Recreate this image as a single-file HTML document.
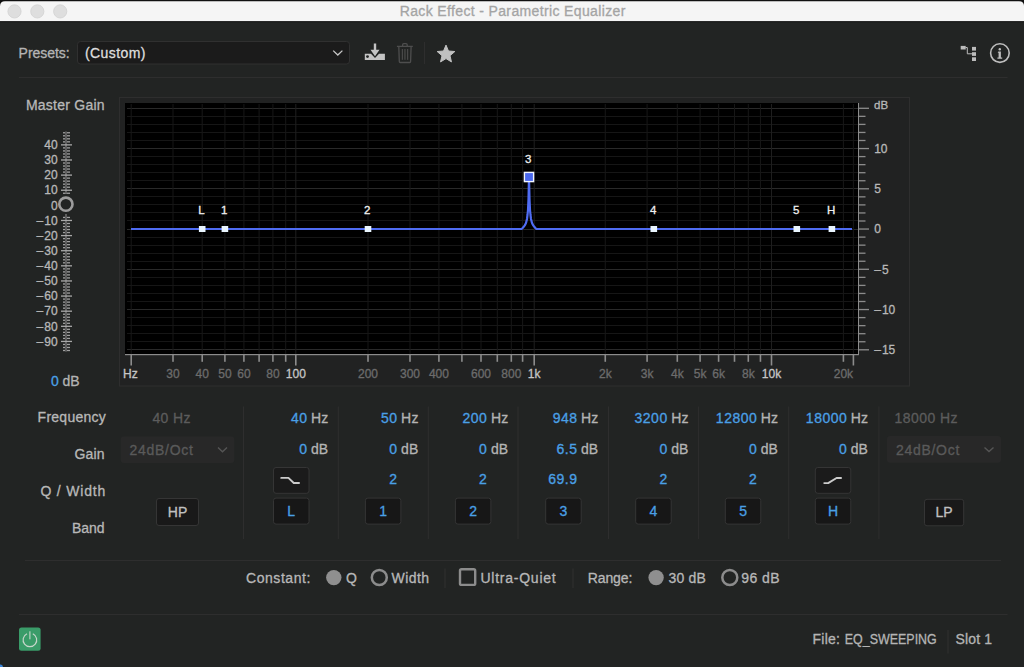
<!DOCTYPE html>
<html><head><meta charset="utf-8"><title>Rack Effect - Parametric Equalizer</title>
<style>html,body{margin:0;padding:0;background:#222423;overflow:hidden;width:1024px;height:667px}svg text{font-family:"Liberation Sans",sans-serif}</style></head>
<body><svg width="1024" height="667" viewBox="0 0 1024 667" style="display:block;font-family:'Liberation Sans',sans-serif" font-family="Liberation Sans, sans-serif"><rect x="0" y="0" width="1024" height="667" fill="#222423"/>
<rect x="0" y="0" width="1024" height="22" fill="#111"/>
<path d="M0,6 Q0,1.3 5,1.3 L1019,1.3 Q1024,1.3 1024,6 L1024,21.3 L0,21.3 Z" fill="#f5f5f5"/>
<rect x="0" y="21.3" width="1024" height="1" fill="#1a1a1a"/>
<circle cx="14.5" cy="11.4" r="6.6" fill="#dedede" stroke="#d2d2d2" stroke-width="0.8"/>
<circle cx="37.3" cy="11.4" r="6.6" fill="#dedede" stroke="#d2d2d2" stroke-width="0.8"/>
<circle cx="60.2" cy="11.4" r="6.6" fill="#dedede" stroke="#d2d2d2" stroke-width="0.8"/>
<text x="512.7" y="16.1" font-size="14" fill="#a4a4a4" stroke="#a4a4a4" stroke-width="0.3" text-anchor="middle" font-weight="normal" letter-spacing="0.36" >Rack Effect - Parametric Equalizer</text>
<text x="18.6" y="58.4" font-size="14" fill="#b4b4b4" stroke="#b4b4b4" stroke-width="0.3" text-anchor="start" font-weight="normal" letter-spacing="-0.05" >Presets:</text>
<rect x="77.5" y="41.5" width="272" height="22.5" rx="3" fill="#1b1b1b" stroke="#303030"/>
<text x="85" y="58.4" font-size="14" fill="#dedede" stroke="#dedede" stroke-width="0.3" text-anchor="start" font-weight="normal" letter-spacing="0.4" >(Custom)</text>
<polyline points="333.2,50.6 337.8,55 342.4,50.6" fill="none" stroke="#c8c8c8" stroke-width="1.3"/>
<path d="M373.8,43.6 h2.4 v6.2 h3.3 l-4.5,6.4 l-4.5,-6.4 h3.3 z" fill="#c4c4c4"/>
<path d="M364.8,53.8 h6.2 l4,4.3 l4,-4.3 h5.9 v6.3 h-20.1 z" fill="#c4c4c4"/>
<circle cx="367.5" cy="56.6" r="1.4" fill="#222423"/>
<g fill="none" stroke="#4e4e4e" stroke-width="1.3"><path d="M396.9,46.4 h15.9"/><path d="M402.6,46.2 v-1.3 q0,-1.2 1.2,-1.2 h2.2 q1.2,0 1.2,1.2 v1.3"/><path d="M398.8,46.6 l0.5,15 q0,0.9 0.9,0.9 h9.5 q0.9,0 0.9,-0.9 l0.5,-15"/></g>
<g fill="#4e4e4e"><rect x="401.8" y="49" width="1.1" height="10.8"/><rect x="404.4" y="49" width="1.1" height="10.8"/><rect x="407.1" y="49" width="1.1" height="10.8"/></g>
<rect x="424" y="42" width="1" height="22" fill="#2e2e2e"/>
<polygon points="446.00,45.10 448.47,51.00 454.84,51.53 449.99,55.70 451.47,61.92 446.00,58.60 440.53,61.92 442.01,55.70 437.16,51.53 443.53,51.00" fill="#c0c0c0" stroke="#c0c0c0" stroke-width="1" stroke-linejoin="round"/>
<g fill="#bcbcbc"><rect x="960.7" y="45.9" width="5" height="3.6"/><rect x="972" y="46.9" width="4" height="3.7"/><rect x="972" y="52.2" width="4" height="3.7"/><rect x="972" y="57.3" width="4" height="3.7"/></g>
<path d="M965.5,47.5 h1.8 v6.3 h4.9" fill="none" stroke="#bcbcbc" stroke-width="1"/>
<circle cx="999.9" cy="53.1" r="9.3" fill="none" stroke="#bdbdbd" stroke-width="1.6"/>
<circle cx="999.8" cy="49.2" r="1.2" fill="#bdbdbd"/>
<path d="M998.3,51.4 h2.6 v6 h1.3 v1.3 h-4.8 v-1.3 h1.2 v-4.7 h-0.9 z" fill="#bdbdbd"/>
<rect x="19" y="77" width="988.5" height="1" fill="#2e2e2e"/>
<rect x="119.5" y="97.5" width="790" height="288.5" fill="#212222" stroke="#2e2e2e"/>
<rect x="125" y="103" width="733.5" height="251.5" fill="#000"/>
<rect x="127" y="349" width="731" height="1" fill="#2a2a2a"/>
<rect x="127" y="341" width="731" height="1" fill="#161616"/>
<rect x="127" y="333" width="731" height="1" fill="#161616"/>
<rect x="127" y="325" width="731" height="1" fill="#161616"/>
<rect x="127" y="317" width="731" height="1" fill="#161616"/>
<rect x="127" y="309" width="731" height="1" fill="#2a2a2a"/>
<rect x="127" y="301" width="731" height="1" fill="#161616"/>
<rect x="127" y="293" width="731" height="1" fill="#161616"/>
<rect x="127" y="285" width="731" height="1" fill="#161616"/>
<rect x="127" y="277" width="731" height="1" fill="#161616"/>
<rect x="127" y="269" width="731" height="1" fill="#2a2a2a"/>
<rect x="127" y="261" width="731" height="1" fill="#161616"/>
<rect x="127" y="253" width="731" height="1" fill="#161616"/>
<rect x="127" y="245" width="731" height="1" fill="#161616"/>
<rect x="127" y="237" width="731" height="1" fill="#161616"/>
<rect x="127" y="229" width="731" height="1" fill="#2a2a2a"/>
<rect x="127" y="220" width="731" height="1" fill="#161616"/>
<rect x="127" y="212" width="731" height="1" fill="#161616"/>
<rect x="127" y="204" width="731" height="1" fill="#161616"/>
<rect x="127" y="196" width="731" height="1" fill="#161616"/>
<rect x="127" y="188" width="731" height="1" fill="#2a2a2a"/>
<rect x="127" y="180" width="731" height="1" fill="#161616"/>
<rect x="127" y="172" width="731" height="1" fill="#161616"/>
<rect x="127" y="164" width="731" height="1" fill="#161616"/>
<rect x="127" y="156" width="731" height="1" fill="#161616"/>
<rect x="127" y="148" width="731" height="1" fill="#2a2a2a"/>
<rect x="127" y="140" width="731" height="1" fill="#161616"/>
<rect x="127" y="132" width="731" height="1" fill="#161616"/>
<rect x="127" y="124" width="731" height="1" fill="#161616"/>
<rect x="127" y="116" width="731" height="1" fill="#161616"/>
<rect x="127" y="108" width="731" height="1" fill="#2a2a2a"/>
<rect x="130.70" y="104" width="1" height="250" fill="#171717"/>
<rect x="172.50" y="104" width="1" height="250" fill="#171717"/>
<rect x="201.70" y="104" width="1" height="250" fill="#171717"/>
<rect x="224.40" y="104" width="1" height="250" fill="#171717"/>
<rect x="243.40" y="104" width="1" height="250" fill="#171717"/>
<rect x="258.60" y="104" width="1" height="250" fill="#171717"/>
<rect x="272.40" y="104" width="1" height="250" fill="#171717"/>
<rect x="285.20" y="104" width="1" height="250" fill="#171717"/>
<rect x="295.30" y="104" width="1" height="250" fill="#1e1e1e"/>
<rect x="367.50" y="104" width="1" height="250" fill="#171717"/>
<rect x="409.50" y="104" width="1" height="250" fill="#171717"/>
<rect x="438.40" y="104" width="1" height="250" fill="#171717"/>
<rect x="461.40" y="104" width="1" height="250" fill="#171717"/>
<rect x="480.50" y="104" width="1" height="250" fill="#171717"/>
<rect x="496.80" y="104" width="1" height="250" fill="#171717"/>
<rect x="510.80" y="104" width="1" height="250" fill="#171717"/>
<rect x="522.10" y="104" width="1" height="250" fill="#171717"/>
<rect x="533.70" y="104" width="1" height="250" fill="#1e1e1e"/>
<rect x="604.76" y="104" width="1" height="250" fill="#171717"/>
<rect x="646.59" y="104" width="1" height="250" fill="#171717"/>
<rect x="676.80" y="104" width="1" height="250" fill="#171717"/>
<rect x="699.60" y="104" width="1" height="250" fill="#171717"/>
<rect x="718.10" y="104" width="1" height="250" fill="#171717"/>
<rect x="734.01" y="104" width="1" height="250" fill="#171717"/>
<rect x="747.79" y="104" width="1" height="250" fill="#171717"/>
<rect x="759.94" y="104" width="1" height="250" fill="#171717"/>
<rect x="771.00" y="104" width="1" height="250" fill="#1e1e1e"/>
<rect x="842.90" y="104" width="1" height="250" fill="#171717"/>
<rect x="852.90" y="104" width="1" height="250" fill="#171717"/>
<rect x="125" y="354" width="734" height="1.2" fill="#8c8c8c"/>
<rect x="858" y="103" width="1" height="252" fill="#8c8c8c"/>
<rect x="130.40" y="355" width="1.6" height="10.5" fill="#8c8c8c"/>
<rect x="172.20" y="355" width="1.6" height="6.8" fill="#8c8c8c"/>
<rect x="201.40" y="355" width="1.6" height="6.8" fill="#8c8c8c"/>
<rect x="224.10" y="355" width="1.6" height="6.8" fill="#8c8c8c"/>
<rect x="243.10" y="355" width="1.6" height="6.8" fill="#8c8c8c"/>
<rect x="258.30" y="355" width="1.6" height="6.8" fill="#8c8c8c"/>
<rect x="272.10" y="355" width="1.6" height="6.8" fill="#8c8c8c"/>
<rect x="284.90" y="355" width="1.6" height="6.8" fill="#8c8c8c"/>
<rect x="295.00" y="355" width="1.6" height="10.5" fill="#8c8c8c"/>
<rect x="367.20" y="355" width="1.6" height="6.8" fill="#8c8c8c"/>
<rect x="409.20" y="355" width="1.6" height="6.8" fill="#8c8c8c"/>
<rect x="438.10" y="355" width="1.6" height="6.8" fill="#8c8c8c"/>
<rect x="461.10" y="355" width="1.6" height="6.8" fill="#8c8c8c"/>
<rect x="480.20" y="355" width="1.6" height="6.8" fill="#8c8c8c"/>
<rect x="496.50" y="355" width="1.6" height="6.8" fill="#8c8c8c"/>
<rect x="510.50" y="355" width="1.6" height="6.8" fill="#8c8c8c"/>
<rect x="521.80" y="355" width="1.6" height="6.8" fill="#8c8c8c"/>
<rect x="533.40" y="355" width="1.6" height="10.5" fill="#8c8c8c"/>
<rect x="604.46" y="355" width="1.6" height="6.8" fill="#8c8c8c"/>
<rect x="646.29" y="355" width="1.6" height="6.8" fill="#8c8c8c"/>
<rect x="676.50" y="355" width="1.6" height="6.8" fill="#8c8c8c"/>
<rect x="699.30" y="355" width="1.6" height="6.8" fill="#8c8c8c"/>
<rect x="717.80" y="355" width="1.6" height="6.8" fill="#8c8c8c"/>
<rect x="733.71" y="355" width="1.6" height="6.8" fill="#8c8c8c"/>
<rect x="747.49" y="355" width="1.6" height="6.8" fill="#8c8c8c"/>
<rect x="759.64" y="355" width="1.6" height="6.8" fill="#8c8c8c"/>
<rect x="770.70" y="355" width="1.6" height="10.5" fill="#8c8c8c"/>
<rect x="842.60" y="355" width="1.6" height="6.8" fill="#8c8c8c"/>
<rect x="852.60" y="355" width="1.6" height="10.5" fill="#8c8c8c"/>
<text x="130.4" y="378" font-size="12" fill="#c6c6c6" stroke="#c6c6c6" stroke-width="0.3" text-anchor="middle" font-weight="normal" >Hz</text>
<text x="173" y="378" font-size="12" fill="#6c6c6c" stroke="#6c6c6c" stroke-width="0.3" text-anchor="middle" font-weight="normal" >30</text>
<text x="202.2" y="378" font-size="12" fill="#6c6c6c" stroke="#6c6c6c" stroke-width="0.3" text-anchor="middle" font-weight="normal" >40</text>
<text x="224.9" y="378" font-size="12" fill="#6c6c6c" stroke="#6c6c6c" stroke-width="0.3" text-anchor="middle" font-weight="normal" >50</text>
<text x="243.9" y="378" font-size="12" fill="#6c6c6c" stroke="#6c6c6c" stroke-width="0.3" text-anchor="middle" font-weight="normal" >60</text>
<text x="272.9" y="378" font-size="12" fill="#6c6c6c" stroke="#6c6c6c" stroke-width="0.3" text-anchor="middle" font-weight="normal" >80</text>
<text x="295.8" y="378" font-size="12" fill="#c6c6c6" stroke="#c6c6c6" stroke-width="0.3" text-anchor="middle" font-weight="normal" >100</text>
<text x="368" y="378" font-size="12" fill="#6c6c6c" stroke="#6c6c6c" stroke-width="0.3" text-anchor="middle" font-weight="normal" >200</text>
<text x="410" y="378" font-size="12" fill="#6c6c6c" stroke="#6c6c6c" stroke-width="0.3" text-anchor="middle" font-weight="normal" >300</text>
<text x="438.9" y="378" font-size="12" fill="#6c6c6c" stroke="#6c6c6c" stroke-width="0.3" text-anchor="middle" font-weight="normal" >400</text>
<text x="481" y="378" font-size="12" fill="#6c6c6c" stroke="#6c6c6c" stroke-width="0.3" text-anchor="middle" font-weight="normal" >600</text>
<text x="511.3" y="378" font-size="12" fill="#6c6c6c" stroke="#6c6c6c" stroke-width="0.3" text-anchor="middle" font-weight="normal" >800</text>
<text x="534.2" y="378" font-size="12" fill="#c6c6c6" stroke="#c6c6c6" stroke-width="0.3" text-anchor="middle" font-weight="normal" >1k</text>
<text x="605.3" y="378" font-size="12" fill="#6c6c6c" stroke="#6c6c6c" stroke-width="0.3" text-anchor="middle" font-weight="normal" >2k</text>
<text x="647.1" y="378" font-size="12" fill="#6c6c6c" stroke="#6c6c6c" stroke-width="0.3" text-anchor="middle" font-weight="normal" >3k</text>
<text x="677.3" y="378" font-size="12" fill="#6c6c6c" stroke="#6c6c6c" stroke-width="0.3" text-anchor="middle" font-weight="normal" >4k</text>
<text x="700.1" y="378" font-size="12" fill="#6c6c6c" stroke="#6c6c6c" stroke-width="0.3" text-anchor="middle" font-weight="normal" >5k</text>
<text x="718.6" y="378" font-size="12" fill="#6c6c6c" stroke="#6c6c6c" stroke-width="0.3" text-anchor="middle" font-weight="normal" >6k</text>
<text x="748.3" y="378" font-size="12" fill="#6c6c6c" stroke="#6c6c6c" stroke-width="0.3" text-anchor="middle" font-weight="normal" >8k</text>
<text x="771.5" y="378" font-size="12" fill="#c6c6c6" stroke="#c6c6c6" stroke-width="0.3" text-anchor="middle" font-weight="normal" >10k</text>
<text x="843.4" y="378" font-size="12" fill="#6c6c6c" stroke="#6c6c6c" stroke-width="0.3" text-anchor="middle" font-weight="normal" >20k</text>
<rect x="858" y="349.15" width="11" height="1.3" fill="#8c8c8c"/>
<rect x="858" y="341.1" width="7.5" height="1.3" fill="#8c8c8c"/>
<rect x="858" y="333.04999999999995" width="7.5" height="1.3" fill="#8c8c8c"/>
<rect x="858" y="325.0" width="7.5" height="1.3" fill="#8c8c8c"/>
<rect x="858" y="316.95" width="7.5" height="1.3" fill="#8c8c8c"/>
<rect x="858" y="308.9" width="11" height="1.3" fill="#8c8c8c"/>
<rect x="858" y="300.84999999999997" width="7.5" height="1.3" fill="#8c8c8c"/>
<rect x="858" y="292.79999999999995" width="7.5" height="1.3" fill="#8c8c8c"/>
<rect x="858" y="284.75" width="7.5" height="1.3" fill="#8c8c8c"/>
<rect x="858" y="276.7" width="7.5" height="1.3" fill="#8c8c8c"/>
<rect x="858" y="268.65" width="11" height="1.3" fill="#8c8c8c"/>
<rect x="858" y="260.59999999999997" width="7.5" height="1.3" fill="#8c8c8c"/>
<rect x="858" y="252.55" width="7.5" height="1.3" fill="#8c8c8c"/>
<rect x="858" y="244.5" width="7.5" height="1.3" fill="#8c8c8c"/>
<rect x="858" y="236.45000000000002" width="7.5" height="1.3" fill="#8c8c8c"/>
<rect x="858" y="228.4" width="11" height="1.3" fill="#8c8c8c"/>
<rect x="858" y="220.35" width="7.5" height="1.3" fill="#8c8c8c"/>
<rect x="858" y="212.3" width="7.5" height="1.3" fill="#8c8c8c"/>
<rect x="858" y="204.25" width="7.5" height="1.3" fill="#8c8c8c"/>
<rect x="858" y="196.20000000000002" width="7.5" height="1.3" fill="#8c8c8c"/>
<rect x="858" y="188.15" width="11" height="1.3" fill="#8c8c8c"/>
<rect x="858" y="180.1" width="7.5" height="1.3" fill="#8c8c8c"/>
<rect x="858" y="172.04999999999998" width="7.5" height="1.3" fill="#8c8c8c"/>
<rect x="858" y="164.0" width="7.5" height="1.3" fill="#8c8c8c"/>
<rect x="858" y="155.95000000000002" width="7.5" height="1.3" fill="#8c8c8c"/>
<rect x="858" y="147.9" width="11" height="1.3" fill="#8c8c8c"/>
<rect x="858" y="139.85" width="7.5" height="1.3" fill="#8c8c8c"/>
<rect x="858" y="131.79999999999998" width="7.5" height="1.3" fill="#8c8c8c"/>
<rect x="858" y="123.75" width="7.5" height="1.3" fill="#8c8c8c"/>
<rect x="858" y="115.69999999999999" width="7.5" height="1.3" fill="#8c8c8c"/>
<rect x="858" y="107.64999999999999" width="11" height="1.3" fill="#8c8c8c"/>
<text x="874" y="108.8" font-size="11.5" fill="#b8b8b8" stroke="#b8b8b8" stroke-width="0.3" text-anchor="start" font-weight="normal" >dB</text>
<text x="874.2" y="152.8" font-size="12" fill="#b8b8b8" stroke="#b8b8b8" stroke-width="0.3" text-anchor="start" font-weight="normal" >10</text>
<text x="874.2" y="193.05" font-size="12" fill="#b8b8b8" stroke="#b8b8b8" stroke-width="0.3" text-anchor="start" font-weight="normal" >5</text>
<text x="874.2" y="233.3" font-size="12" fill="#b8b8b8" stroke="#b8b8b8" stroke-width="0.3" text-anchor="start" font-weight="normal" >0</text>
<text x="874.2" y="273.55" font-size="12" fill="#b8b8b8" stroke="#b8b8b8" stroke-width="0.3" text-anchor="start" font-weight="normal" >–<tspan dx="1">5</tspan></text>
<text x="874.2" y="313.8" font-size="12" fill="#b8b8b8" stroke="#b8b8b8" stroke-width="0.3" text-anchor="start" font-weight="normal" >–<tspan dx="1">10</tspan></text>
<text x="874.2" y="354.05" font-size="12" fill="#b8b8b8" stroke="#b8b8b8" stroke-width="0.3" text-anchor="start" font-weight="normal" >–<tspan dx="1">15</tspan></text>
<polyline points="131.000,229.00 520.000,229.00 519.000,229.00 519.125,229.00 519.250,229.00 519.375,229.00 519.500,229.00 519.625,229.00 519.750,229.00 519.875,229.00 520.000,229.00 520.125,229.00 520.250,229.00 520.375,229.00 520.500,229.00 520.625,229.00 520.750,229.00 520.875,229.00 521.000,229.00 521.125,229.00 521.250,229.00 521.375,229.00 521.500,229.00 521.625,228.90 521.750,228.80 521.875,228.70 522.000,228.60 522.125,228.47 522.250,228.35 522.375,228.22 522.500,228.10 522.625,227.97 522.750,227.85 522.875,227.72 523.000,227.60 523.125,227.45 523.250,227.30 523.375,227.15 523.500,227.00 523.625,226.85 523.750,226.70 523.875,226.55 524.000,226.40 524.125,226.22 524.250,226.05 524.375,225.88 524.500,225.70 524.625,225.53 524.750,225.35 524.875,225.18 525.000,225.00 525.125,224.75 525.250,224.50 525.375,224.25 525.500,224.00 525.625,223.75 525.750,223.50 525.875,223.25 526.000,223.00 526.125,222.50 526.250,222.00 526.375,221.50 526.500,221.00 526.625,220.50 526.750,220.00 526.875,219.50 527.000,219.00 527.125,218.00 527.250,217.00 527.375,216.00 527.500,215.00 527.625,213.75 527.750,212.50 527.875,211.25 528.000,210.00 528.125,207.25 528.250,204.50 528.375,201.75 528.500,199.00 528.625,193.50 528.750,188.00 528.875,182.50 529.000,177.00 529.125,182.50 529.250,188.00 529.375,193.50 529.500,199.00 529.625,201.75 529.750,204.50 529.875,207.25 530.000,210.00 530.125,211.25 530.250,212.50 530.375,213.75 530.500,215.00 530.625,216.00 530.750,217.00 530.875,218.00 531.000,219.00 531.125,219.50 531.250,220.00 531.375,220.50 531.500,221.00 531.625,221.50 531.750,222.00 531.875,222.50 532.000,223.00 532.125,223.25 532.250,223.50 532.375,223.75 532.500,224.00 532.625,224.25 532.750,224.50 532.875,224.75 533.000,225.00 533.125,225.18 533.250,225.35 533.375,225.53 533.500,225.70 533.625,225.88 533.750,226.05 533.875,226.22 534.000,226.40 534.125,226.55 534.250,226.70 534.375,226.85 534.500,227.00 534.625,227.15 534.750,227.30 534.875,227.45 535.000,227.60 535.125,227.72 535.250,227.85 535.375,227.97 535.500,228.10 535.625,228.22 535.750,228.35 535.875,228.47 536.000,228.60 536.125,228.70 536.250,228.80 536.375,228.90 536.500,229.00 536.625,229.00 536.750,229.00 536.875,229.00 537.000,229.00 537.125,229.00 537.250,229.00 537.375,229.00 537.500,229.00 537.625,229.00 537.750,229.00 537.875,229.00 538.000,229.00 538.125,229.00 538.250,229.00 538.375,229.00 538.500,229.00 538.625,229.00 538.750,229.00 538.875,229.00 539.000,229.00 538.000,229.00 852.000,229.00" fill="none" stroke="#4f6cf2" stroke-width="2.2" stroke-linejoin="round"/>
<rect x="198.9" y="226" width="6.6" height="6" fill="#eaf6ff"/>
<text x="201.5" y="214.1" font-size="11.5" fill="#f0f0f0" stroke="#f0f0f0" stroke-width="0.3" text-anchor="middle" font-weight="normal" >L</text>
<rect x="221.6" y="226" width="6.6" height="6" fill="#eaf6ff"/>
<text x="224.2" y="214.1" font-size="11.5" fill="#f0f0f0" stroke="#f0f0f0" stroke-width="0.3" text-anchor="middle" font-weight="normal" >1</text>
<rect x="364.7" y="226" width="6.6" height="6" fill="#eaf6ff"/>
<text x="367.3" y="214.1" font-size="11.5" fill="#f0f0f0" stroke="#f0f0f0" stroke-width="0.3" text-anchor="middle" font-weight="normal" >2</text>
<rect x="650.5" y="226" width="6.6" height="6" fill="#eaf6ff"/>
<text x="653.1" y="214.1" font-size="11.5" fill="#f0f0f0" stroke="#f0f0f0" stroke-width="0.3" text-anchor="middle" font-weight="normal" >4</text>
<rect x="793.5" y="226" width="6.6" height="6" fill="#eaf6ff"/>
<text x="796.1" y="214.1" font-size="11.5" fill="#f0f0f0" stroke="#f0f0f0" stroke-width="0.3" text-anchor="middle" font-weight="normal" >5</text>
<rect x="828.6" y="226" width="6.6" height="6" fill="#eaf6ff"/>
<text x="831.2" y="214.1" font-size="11.5" fill="#f0f0f0" stroke="#f0f0f0" stroke-width="0.3" text-anchor="middle" font-weight="normal" >H</text>
<rect x="524.4" y="172.4" width="9.2" height="9.2" fill="#4a68ee" stroke="#f0f4ff" stroke-width="1.4"/>
<text x="528.2" y="162.6" font-size="11.5" fill="#f0f0f0" stroke="#f0f0f0" stroke-width="0.3" text-anchor="middle" font-weight="normal" >3</text>
<text x="25.9" y="110" font-size="14" fill="#b8b8b8" stroke="#b8b8b8" stroke-width="0.3" text-anchor="start" font-weight="normal" letter-spacing="0.25" >Master Gain</text>
<rect x="63" y="132.12" width="7" height="1.3" fill="#a0a0a0"/>
<rect x="63" y="135.15" width="7" height="1.3" fill="#a0a0a0"/>
<rect x="63" y="138.17" width="7" height="1.3" fill="#a0a0a0"/>
<rect x="63" y="141.20" width="7" height="1.3" fill="#a0a0a0"/>
<rect x="63" y="147.24" width="7" height="1.3" fill="#a0a0a0"/>
<rect x="63" y="150.27" width="7" height="1.3" fill="#a0a0a0"/>
<rect x="63" y="153.29" width="7" height="1.3" fill="#a0a0a0"/>
<rect x="63" y="156.32" width="7" height="1.3" fill="#a0a0a0"/>
<rect x="63" y="162.36" width="7" height="1.3" fill="#a0a0a0"/>
<rect x="63" y="165.39" width="7" height="1.3" fill="#a0a0a0"/>
<rect x="63" y="168.41" width="7" height="1.3" fill="#a0a0a0"/>
<rect x="63" y="171.44" width="7" height="1.3" fill="#a0a0a0"/>
<rect x="63" y="177.48" width="7" height="1.3" fill="#a0a0a0"/>
<rect x="63" y="180.51" width="7" height="1.3" fill="#a0a0a0"/>
<rect x="63" y="183.53" width="7" height="1.3" fill="#a0a0a0"/>
<rect x="63" y="186.56" width="7" height="1.3" fill="#a0a0a0"/>
<rect x="63" y="192.60" width="7" height="1.3" fill="#a0a0a0"/>
<rect x="63" y="216.80" width="7" height="1.3" fill="#a0a0a0"/>
<rect x="63" y="222.84" width="7" height="1.3" fill="#a0a0a0"/>
<rect x="63" y="225.87" width="7" height="1.3" fill="#a0a0a0"/>
<rect x="63" y="228.89" width="7" height="1.3" fill="#a0a0a0"/>
<rect x="63" y="231.92" width="7" height="1.3" fill="#a0a0a0"/>
<rect x="63" y="237.96" width="7" height="1.3" fill="#a0a0a0"/>
<rect x="63" y="240.99" width="7" height="1.3" fill="#a0a0a0"/>
<rect x="63" y="244.01" width="7" height="1.3" fill="#a0a0a0"/>
<rect x="63" y="247.04" width="7" height="1.3" fill="#a0a0a0"/>
<rect x="63" y="253.08" width="7" height="1.3" fill="#a0a0a0"/>
<rect x="63" y="256.11" width="7" height="1.3" fill="#a0a0a0"/>
<rect x="63" y="259.13" width="7" height="1.3" fill="#a0a0a0"/>
<rect x="63" y="262.16" width="7" height="1.3" fill="#a0a0a0"/>
<rect x="63" y="268.20" width="7" height="1.3" fill="#a0a0a0"/>
<rect x="63" y="271.23" width="7" height="1.3" fill="#a0a0a0"/>
<rect x="63" y="274.25" width="7" height="1.3" fill="#a0a0a0"/>
<rect x="63" y="277.28" width="7" height="1.3" fill="#a0a0a0"/>
<rect x="63" y="283.32" width="7" height="1.3" fill="#a0a0a0"/>
<rect x="63" y="286.35" width="7" height="1.3" fill="#a0a0a0"/>
<rect x="63" y="289.37" width="7" height="1.3" fill="#a0a0a0"/>
<rect x="63" y="292.40" width="7" height="1.3" fill="#a0a0a0"/>
<rect x="63" y="298.44" width="7" height="1.3" fill="#a0a0a0"/>
<rect x="63" y="301.47" width="7" height="1.3" fill="#a0a0a0"/>
<rect x="63" y="304.49" width="7" height="1.3" fill="#a0a0a0"/>
<rect x="63" y="307.52" width="7" height="1.3" fill="#a0a0a0"/>
<rect x="63" y="313.56" width="7" height="1.3" fill="#a0a0a0"/>
<rect x="63" y="316.59" width="7" height="1.3" fill="#a0a0a0"/>
<rect x="63" y="319.61" width="7" height="1.3" fill="#a0a0a0"/>
<rect x="63" y="322.64" width="7" height="1.3" fill="#a0a0a0"/>
<rect x="63" y="328.68" width="7" height="1.3" fill="#a0a0a0"/>
<rect x="63" y="331.71" width="7" height="1.3" fill="#a0a0a0"/>
<rect x="63" y="334.73" width="7" height="1.3" fill="#a0a0a0"/>
<rect x="63" y="337.76" width="7" height="1.3" fill="#a0a0a0"/>
<rect x="63" y="343.80" width="7" height="1.3" fill="#a0a0a0"/>
<rect x="63" y="346.83" width="7" height="1.3" fill="#a0a0a0"/>
<rect x="63" y="349.85" width="7" height="1.3" fill="#a0a0a0"/>
<rect x="65" y="131.5" width="2" height="62" fill="#5e5e5e"/>
<rect x="65" y="214" width="2" height="137.5" fill="#5e5e5e"/>
<rect x="61" y="144.22" width="11" height="1.3" fill="#a8a8a8"/>
<rect x="61" y="159.34" width="11" height="1.3" fill="#a8a8a8"/>
<rect x="61" y="174.46" width="11" height="1.3" fill="#a8a8a8"/>
<rect x="61" y="189.58" width="11" height="1.3" fill="#a8a8a8"/>
<rect x="61" y="219.82" width="11" height="1.3" fill="#a8a8a8"/>
<rect x="61" y="234.94" width="11" height="1.3" fill="#a8a8a8"/>
<rect x="61" y="250.06" width="11" height="1.3" fill="#a8a8a8"/>
<rect x="61" y="265.18" width="11" height="1.3" fill="#a8a8a8"/>
<rect x="61" y="280.30" width="11" height="1.3" fill="#a8a8a8"/>
<rect x="61" y="295.42" width="11" height="1.3" fill="#a8a8a8"/>
<rect x="61" y="310.54" width="11" height="1.3" fill="#a8a8a8"/>
<rect x="61" y="325.66" width="11" height="1.3" fill="#a8a8a8"/>
<rect x="61" y="340.78" width="11" height="1.3" fill="#a8a8a8"/>
<text x="57.6" y="149.12" font-size="12" fill="#b8b8b8" stroke="#b8b8b8" stroke-width="0.3" text-anchor="end" font-weight="normal" >40</text>
<text x="57.6" y="164.24" font-size="12" fill="#b8b8b8" stroke="#b8b8b8" stroke-width="0.3" text-anchor="end" font-weight="normal" >30</text>
<text x="57.6" y="179.36" font-size="12" fill="#b8b8b8" stroke="#b8b8b8" stroke-width="0.3" text-anchor="end" font-weight="normal" >20</text>
<text x="57.6" y="194.48" font-size="12" fill="#b8b8b8" stroke="#b8b8b8" stroke-width="0.3" text-anchor="end" font-weight="normal" >10</text>
<text x="57.6" y="209.6" font-size="12" fill="#b8b8b8" stroke="#b8b8b8" stroke-width="0.3" text-anchor="end" font-weight="normal" >0</text>
<text x="57.6" y="224.72" font-size="12" fill="#b8b8b8" stroke="#b8b8b8" stroke-width="0.3" text-anchor="end" font-weight="normal" >–<tspan dx="1">10</tspan></text>
<text x="57.6" y="239.84" font-size="12" fill="#b8b8b8" stroke="#b8b8b8" stroke-width="0.3" text-anchor="end" font-weight="normal" >–<tspan dx="1">20</tspan></text>
<text x="57.6" y="254.96" font-size="12" fill="#b8b8b8" stroke="#b8b8b8" stroke-width="0.3" text-anchor="end" font-weight="normal" >–<tspan dx="1">30</tspan></text>
<text x="57.6" y="270.08" font-size="12" fill="#b8b8b8" stroke="#b8b8b8" stroke-width="0.3" text-anchor="end" font-weight="normal" >–<tspan dx="1">40</tspan></text>
<text x="57.6" y="285.2" font-size="12" fill="#b8b8b8" stroke="#b8b8b8" stroke-width="0.3" text-anchor="end" font-weight="normal" >–<tspan dx="1">50</tspan></text>
<text x="57.6" y="300.32" font-size="12" fill="#b8b8b8" stroke="#b8b8b8" stroke-width="0.3" text-anchor="end" font-weight="normal" >–<tspan dx="1">60</tspan></text>
<text x="57.6" y="315.44" font-size="12" fill="#b8b8b8" stroke="#b8b8b8" stroke-width="0.3" text-anchor="end" font-weight="normal" >–<tspan dx="1">70</tspan></text>
<text x="57.6" y="330.56" font-size="12" fill="#b8b8b8" stroke="#b8b8b8" stroke-width="0.3" text-anchor="end" font-weight="normal" >–<tspan dx="1">80</tspan></text>
<text x="57.6" y="345.68" font-size="12" fill="#b8b8b8" stroke="#b8b8b8" stroke-width="0.3" text-anchor="end" font-weight="normal" >–<tspan dx="1">90</tspan></text>
<circle cx="65.9" cy="204.2" r="6.6" fill="#222423" stroke="#9c9c9c" stroke-width="2.6"/>
<text x="51" y="385.6" font-size="14" fill="#4aa0e6" stroke="#4aa0e6" stroke-width="0.3" text-anchor="start" font-weight="normal" >0</text>
<text x="62.5" y="385.6" font-size="14" fill="#b4b4b4" stroke="#b4b4b4" stroke-width="0.3" text-anchor="start" font-weight="normal" >dB</text>
<text x="106" y="422.3" font-size="14" fill="#b8b8b8" stroke="#b8b8b8" stroke-width="0.3" text-anchor="end" font-weight="normal" letter-spacing="0.25" >Frequency</text>
<text x="104.8" y="458.7" font-size="14" fill="#b8b8b8" stroke="#b8b8b8" stroke-width="0.3" text-anchor="end" font-weight="normal" letter-spacing="0.2" >Gain</text>
<text x="106" y="496" font-size="14" fill="#b8b8b8" stroke="#b8b8b8" stroke-width="0.3" text-anchor="end" font-weight="normal" letter-spacing="0.8" >Q / Width</text>
<text x="104.6" y="532.7" font-size="14" fill="#b8b8b8" stroke="#b8b8b8" stroke-width="0.3" text-anchor="end" font-weight="normal" >Band</text>
<rect x="243.0" y="406.5" width="1" height="132.5" fill="#2e2e2e"/>
<rect x="337.8" y="406.5" width="1" height="132.5" fill="#2e2e2e"/>
<rect x="427.8" y="406.5" width="1" height="132.5" fill="#2e2e2e"/>
<rect x="517.5" y="406.5" width="1" height="132.5" fill="#2e2e2e"/>
<rect x="608.0" y="406.5" width="1" height="132.5" fill="#2e2e2e"/>
<rect x="697.9" y="406.5" width="1" height="132.5" fill="#2e2e2e"/>
<rect x="788.2" y="406.5" width="1" height="132.5" fill="#2e2e2e"/>
<rect x="878.4" y="406.5" width="1" height="132.5" fill="#2e2e2e"/>
<text x="191" y="423" font-size="14" fill="#5c5c5c" stroke="#5c5c5c" stroke-width="0.3" text-anchor="end" font-weight="normal" letter-spacing="0.4" >40 Hz</text>
<rect x="120.7" y="436.5" width="113.6" height="26.6" rx="3" fill="#282828"/>
<text x="129.6" y="454.5" font-size="14" fill="#5a5a5a" stroke="#5a5a5a" stroke-width="0.3" text-anchor="start" font-weight="normal" letter-spacing="0.7" >24dB/Oct</text>
<polyline points="218,447.6 222.5,451.8 227,447.6" fill="none" stroke="#555" stroke-width="1.4"/>
<rect x="156.5" y="498.5" width="42" height="27" rx="2.5" fill="#191919" stroke="#353535"/>
<text x="177.5" y="517" font-size="14" fill="#c0c0c0" stroke="#c0c0c0" stroke-width="0.3" text-anchor="middle" font-weight="normal" >HP</text>
<text x="958" y="423" font-size="14" fill="#5c5c5c" stroke="#5c5c5c" stroke-width="0.3" text-anchor="end" font-weight="normal" letter-spacing="0.45" >18000 Hz</text>
<rect x="887" y="436" width="114" height="26.7" rx="3" fill="#282828"/>
<text x="896" y="454.5" font-size="14" fill="#5a5a5a" stroke="#5a5a5a" stroke-width="0.3" text-anchor="start" font-weight="normal" letter-spacing="0.7" >24dB/Oct</text>
<polyline points="984.5,447.4 989,451.6 993.5,447.4" fill="none" stroke="#555" stroke-width="1.4"/>
<rect x="924.5" y="499.3" width="39.200000000000045" height="26.499999999999943" rx="2.5" fill="#191919" stroke="#353535"/>
<text x="944.1" y="517" font-size="14" fill="#c0c0c0" stroke="#c0c0c0" stroke-width="0.3" text-anchor="middle" font-weight="normal" >LP</text>
<text x="307.5" y="423" font-size="14" fill="#4aa0e6" stroke="#4aa0e6" stroke-width="0.3" text-anchor="end" font-weight="normal" letter-spacing="0.5" >40</text>
<text x="311.0" y="423" font-size="14" fill="#b4b4b4" stroke="#b4b4b4" stroke-width="0.3" text-anchor="start" font-weight="normal" letter-spacing="0.2" >Hz</text>
<text x="307.5" y="453.5" font-size="14" fill="#4aa0e6" stroke="#4aa0e6" stroke-width="0.3" text-anchor="end" font-weight="normal" letter-spacing="0.5" >0</text>
<text x="311.0" y="453.5" font-size="14" fill="#b4b4b4" stroke="#b4b4b4" stroke-width="0.3" text-anchor="start" font-weight="normal" >dB</text>
<rect x="273.5" y="467.5" width="35.5" height="25.80000000000001" rx="2.5" fill="#1b1b1b" stroke="#353535"/>
<path d="M281.25,477.9 h7.2 l5.3,5.1 h5.3" fill="none" stroke="#cccccc" stroke-width="1.9" stroke-linecap="round" stroke-linejoin="round"/>
<rect x="273.5" y="498.1" width="35.5" height="26.0" rx="2.5" fill="#171717" stroke="#353535"/>
<text x="291.25" y="516" font-size="14" fill="#4aa0e6" stroke="#4aa0e6" stroke-width="0.3" text-anchor="middle" font-weight="normal" >L</text>
<text x="397.6" y="423" font-size="14" fill="#4aa0e6" stroke="#4aa0e6" stroke-width="0.3" text-anchor="end" font-weight="normal" letter-spacing="0.5" >50</text>
<text x="401.1" y="423" font-size="14" fill="#b4b4b4" stroke="#b4b4b4" stroke-width="0.3" text-anchor="start" font-weight="normal" letter-spacing="0.2" >Hz</text>
<text x="397.6" y="453.5" font-size="14" fill="#4aa0e6" stroke="#4aa0e6" stroke-width="0.3" text-anchor="end" font-weight="normal" letter-spacing="0.5" >0</text>
<text x="401.1" y="453.5" font-size="14" fill="#b4b4b4" stroke="#b4b4b4" stroke-width="0.3" text-anchor="start" font-weight="normal" >dB</text>
<text x="397.6" y="484.3" font-size="14" fill="#4aa0e6" stroke="#4aa0e6" stroke-width="0.3" text-anchor="end" font-weight="normal" letter-spacing="0.5" >2</text>
<rect x="365.4" y="498.1" width="35.5" height="26.0" rx="2.5" fill="#171717" stroke="#353535"/>
<text x="383.15" y="516" font-size="14" fill="#4aa0e6" stroke="#4aa0e6" stroke-width="0.3" text-anchor="middle" font-weight="normal" >1</text>
<text x="487.4" y="423" font-size="14" fill="#4aa0e6" stroke="#4aa0e6" stroke-width="0.3" text-anchor="end" font-weight="normal" letter-spacing="0.5" >200</text>
<text x="490.9" y="423" font-size="14" fill="#b4b4b4" stroke="#b4b4b4" stroke-width="0.3" text-anchor="start" font-weight="normal" letter-spacing="0.2" >Hz</text>
<text x="487.4" y="453.5" font-size="14" fill="#4aa0e6" stroke="#4aa0e6" stroke-width="0.3" text-anchor="end" font-weight="normal" letter-spacing="0.5" >0</text>
<text x="490.9" y="453.5" font-size="14" fill="#b4b4b4" stroke="#b4b4b4" stroke-width="0.3" text-anchor="start" font-weight="normal" >dB</text>
<text x="487.4" y="484.3" font-size="14" fill="#4aa0e6" stroke="#4aa0e6" stroke-width="0.3" text-anchor="end" font-weight="normal" letter-spacing="0.5" >2</text>
<rect x="455.4" y="498.1" width="35.5" height="26.0" rx="2.5" fill="#171717" stroke="#353535"/>
<text x="473.15" y="516" font-size="14" fill="#4aa0e6" stroke="#4aa0e6" stroke-width="0.3" text-anchor="middle" font-weight="normal" >2</text>
<text x="577.5" y="423" font-size="14" fill="#4aa0e6" stroke="#4aa0e6" stroke-width="0.3" text-anchor="end" font-weight="normal" letter-spacing="0.5" >948</text>
<text x="581.0" y="423" font-size="14" fill="#b4b4b4" stroke="#b4b4b4" stroke-width="0.3" text-anchor="start" font-weight="normal" letter-spacing="0.2" >Hz</text>
<text x="577.5" y="453.5" font-size="14" fill="#4aa0e6" stroke="#4aa0e6" stroke-width="0.3" text-anchor="end" font-weight="normal" letter-spacing="0.5" >6.5</text>
<text x="581.0" y="453.5" font-size="14" fill="#b4b4b4" stroke="#b4b4b4" stroke-width="0.3" text-anchor="start" font-weight="normal" >dB</text>
<text x="577.5" y="484.3" font-size="14" fill="#4aa0e6" stroke="#4aa0e6" stroke-width="0.3" text-anchor="end" font-weight="normal" letter-spacing="0.5" >69.9</text>
<rect x="545.7" y="498.1" width="35.5" height="26.0" rx="2.5" fill="#171717" stroke="#353535"/>
<text x="563.45" y="516" font-size="14" fill="#4aa0e6" stroke="#4aa0e6" stroke-width="0.3" text-anchor="middle" font-weight="normal" >3</text>
<text x="667.7" y="423" font-size="14" fill="#4aa0e6" stroke="#4aa0e6" stroke-width="0.3" text-anchor="end" font-weight="normal" letter-spacing="0.5" >3200</text>
<text x="671.2" y="423" font-size="14" fill="#b4b4b4" stroke="#b4b4b4" stroke-width="0.3" text-anchor="start" font-weight="normal" letter-spacing="0.2" >Hz</text>
<text x="667.7" y="453.5" font-size="14" fill="#4aa0e6" stroke="#4aa0e6" stroke-width="0.3" text-anchor="end" font-weight="normal" letter-spacing="0.5" >0</text>
<text x="671.2" y="453.5" font-size="14" fill="#b4b4b4" stroke="#b4b4b4" stroke-width="0.3" text-anchor="start" font-weight="normal" >dB</text>
<text x="667.7" y="484.3" font-size="14" fill="#4aa0e6" stroke="#4aa0e6" stroke-width="0.3" text-anchor="end" font-weight="normal" letter-spacing="0.5" >2</text>
<rect x="635.7" y="498.1" width="35.5" height="26.0" rx="2.5" fill="#171717" stroke="#353535"/>
<text x="653.45" y="516" font-size="14" fill="#4aa0e6" stroke="#4aa0e6" stroke-width="0.3" text-anchor="middle" font-weight="normal" >4</text>
<text x="757.3" y="423" font-size="14" fill="#4aa0e6" stroke="#4aa0e6" stroke-width="0.3" text-anchor="end" font-weight="normal" letter-spacing="0.5" >12800</text>
<text x="760.8" y="423" font-size="14" fill="#b4b4b4" stroke="#b4b4b4" stroke-width="0.3" text-anchor="start" font-weight="normal" letter-spacing="0.2" >Hz</text>
<text x="757.3" y="453.5" font-size="14" fill="#4aa0e6" stroke="#4aa0e6" stroke-width="0.3" text-anchor="end" font-weight="normal" letter-spacing="0.5" >0</text>
<text x="760.8" y="453.5" font-size="14" fill="#b4b4b4" stroke="#b4b4b4" stroke-width="0.3" text-anchor="start" font-weight="normal" >dB</text>
<text x="757.3" y="484.3" font-size="14" fill="#4aa0e6" stroke="#4aa0e6" stroke-width="0.3" text-anchor="end" font-weight="normal" letter-spacing="0.5" >2</text>
<rect x="725.3" y="498.1" width="35.5" height="26.0" rx="2.5" fill="#171717" stroke="#353535"/>
<text x="743.05" y="516" font-size="14" fill="#4aa0e6" stroke="#4aa0e6" stroke-width="0.3" text-anchor="middle" font-weight="normal" >5</text>
<text x="847.3" y="423" font-size="14" fill="#4aa0e6" stroke="#4aa0e6" stroke-width="0.3" text-anchor="end" font-weight="normal" letter-spacing="0.5" >18000</text>
<text x="850.8" y="423" font-size="14" fill="#b4b4b4" stroke="#b4b4b4" stroke-width="0.3" text-anchor="start" font-weight="normal" letter-spacing="0.2" >Hz</text>
<text x="847.3" y="453.5" font-size="14" fill="#4aa0e6" stroke="#4aa0e6" stroke-width="0.3" text-anchor="end" font-weight="normal" letter-spacing="0.5" >0</text>
<text x="850.8" y="453.5" font-size="14" fill="#b4b4b4" stroke="#b4b4b4" stroke-width="0.3" text-anchor="start" font-weight="normal" >dB</text>
<rect x="815.3" y="467.5" width="35.5" height="25.80000000000001" rx="2.5" fill="#1b1b1b" stroke="#353535"/>
<path d="M824.25,483.1 h3.9 l8.4,-5.1 h4.5" fill="none" stroke="#cccccc" stroke-width="1.9" stroke-linecap="round" stroke-linejoin="round"/>
<rect x="815.3" y="498.1" width="35.5" height="26.0" rx="2.5" fill="#171717" stroke="#353535"/>
<text x="833.05" y="516" font-size="14" fill="#4aa0e6" stroke="#4aa0e6" stroke-width="0.3" text-anchor="middle" font-weight="normal" >H</text>
<rect x="25" y="560" width="976" height="1" fill="#2e2e2e"/>
<text x="246" y="583.3" font-size="14" fill="#b8b8b8" stroke="#b8b8b8" stroke-width="0.3" text-anchor="start" font-weight="normal" letter-spacing="0.55" >Constant:</text>
<circle cx="333.8" cy="577.6" r="7.7" fill="#8f8f8f"/>
<text x="346" y="583.3" font-size="14" fill="#b8b8b8" stroke="#b8b8b8" stroke-width="0.3" text-anchor="start" font-weight="normal" >Q</text>
<circle cx="379.3" cy="577.5" r="7.5" fill="none" stroke="#8c8c8c" stroke-width="2.5"/>
<text x="391.5" y="583.3" font-size="14" fill="#b8b8b8" stroke="#b8b8b8" stroke-width="0.3" text-anchor="start" font-weight="normal" letter-spacing="0.45" >Width</text>
<rect x="444.5" y="568.5" width="1" height="19.5" fill="#313131"/>
<rect x="460" y="569.2" width="15.2" height="15.7" rx="1.5" fill="none" stroke="#8c8c8c" stroke-width="2.4"/>
<text x="480.5" y="583.3" font-size="14" fill="#b8b8b8" stroke="#b8b8b8" stroke-width="0.3" text-anchor="start" font-weight="normal" letter-spacing="0.75" >Ultra-Quiet</text>
<rect x="572.5" y="568.5" width="1" height="19.5" fill="#313131"/>
<text x="587.7" y="583.3" font-size="14" fill="#b8b8b8" stroke="#b8b8b8" stroke-width="0.3" text-anchor="start" font-weight="normal" letter-spacing="-0.1" >Range:</text>
<circle cx="656.1" cy="577.6" r="7.7" fill="#8f8f8f"/>
<text x="668.5" y="583.3" font-size="14" fill="#b8b8b8" stroke="#b8b8b8" stroke-width="0.3" text-anchor="start" font-weight="normal" letter-spacing="0.2" >30 dB</text>
<circle cx="729.8" cy="577.5" r="7.5" fill="none" stroke="#8c8c8c" stroke-width="2.5"/>
<text x="741.3" y="583.3" font-size="14" fill="#b8b8b8" stroke="#b8b8b8" stroke-width="0.3" text-anchor="start" font-weight="normal" letter-spacing="0.45" >96 dB</text>
<rect x="19" y="614" width="988.5" height="1" fill="#2e2e2e"/>
<rect x="19" y="627.6" width="21.6" height="23.2" rx="2.5" fill="#3a9c69"/>
<path d="M27,633.7 A6.8,6.8 0 1 0 32.8,633.7" fill="none" stroke="#c6d6ca" stroke-width="1.2"/>
<rect x="29.35" y="631.3" width="1.1" height="8" fill="#c6d6ca"/>
<text x="812.6" y="644.3" font-size="14" fill="#b4b4b4" stroke="#b4b4b4" stroke-width="0.3" text-anchor="start" font-weight="normal" letter-spacing="0.2" >File:</text>
<text x="844.8" y="644.3" font-size="14" fill="#b4b4b4" stroke="#b4b4b4" stroke-width="0.3" text-anchor="start" font-weight="normal" textLength="92" lengthAdjust="spacingAndGlyphs" >EQ_SWEEPING</text>
<rect x="947.5" y="630" width="1" height="23.5" fill="#303030"/>
<text x="955.6" y="643.8" font-size="14" fill="#b4b4b4" stroke="#b4b4b4" stroke-width="0.3" text-anchor="start" font-weight="normal" letter-spacing="0.15" >Slot 1</text>
<circle cx="0.3" cy="667" r="2.6" fill="#3a85d8"/></svg></body></html>
